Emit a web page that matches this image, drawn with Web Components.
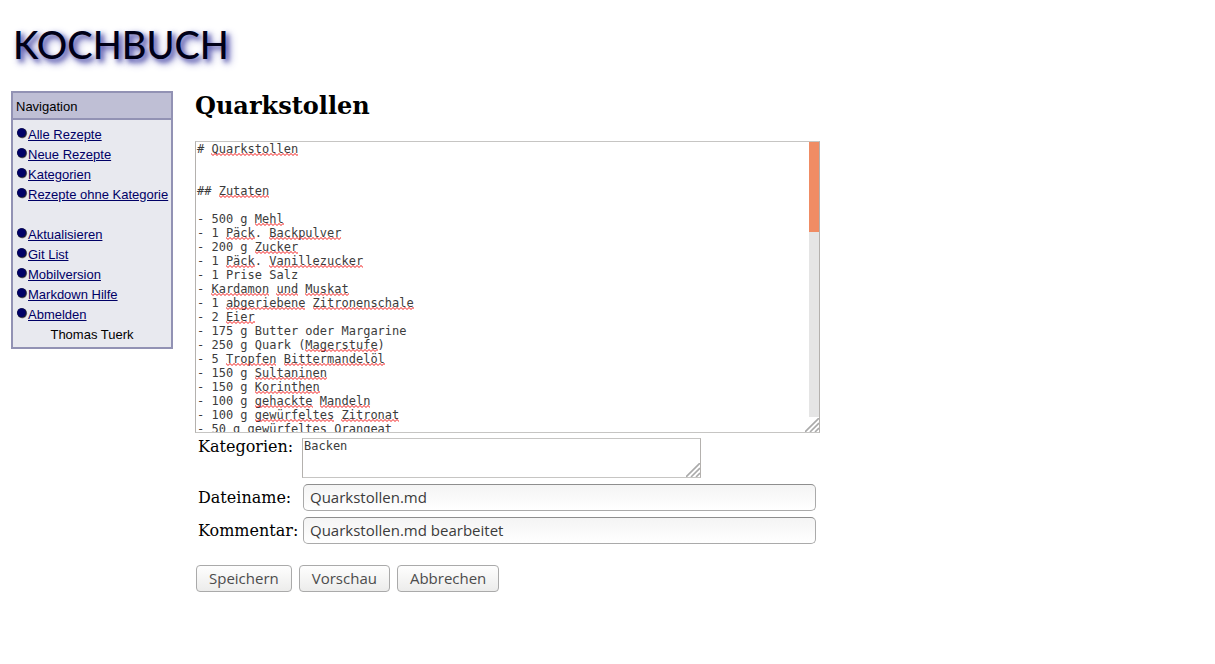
<!DOCTYPE html>
<html lang="de">
<head>
<meta charset="utf-8">
<title>Kochbuch – Quarkstollen</title>
<style>
  body { margin: 0; background: #fff; color: #000; font: 16px/20px "DejaVu Serif", serif; }
</style>
</head>
<body>
<kb-page>
  <kb-logo slot="logo">KOCHBUCH</kb-logo>
  <kb-nav slot="nav" heading="Navigation" user="Thomas Tuerk">
    <kb-link href="#alle">Alle Rezepte</kb-link>
    <kb-link href="#neue">Neue Rezepte</kb-link>
    <kb-link href="#kategorien">Kategorien</kb-link>
    <kb-link href="#ohne">Rezepte ohne Kategorie</kb-link>
    <kb-link class="group" href="#aktualisieren">Aktualisieren</kb-link>
    <kb-link href="#git">Git List</kb-link>
    <kb-link href="#mobil">Mobilversion</kb-link>
    <kb-link href="#markdown">Markdown Hilfe</kb-link>
    <kb-link href="#abmelden">Abmelden</kb-link>
  </kb-nav>
  <kb-editor></kb-editor>
</kb-page>

<script>
const define = (name, html, setup) => customElements.define(name, class extends HTMLElement {
  connectedCallback() {
    if (this.shadowRoot) return;
    const t = document.createElement('template');
    t.innerHTML = html;
    this.attachShadow({ mode: 'open' }).append(t.content.cloneNode(true));
    if (setup) setup(this, this.shadowRoot);
  }
});

define('kb-page', `
<style>
  :host { display: block; padding: 16px 11px; }
  header { height: 75px; }
  .columns { display: flex; align-items: flex-start; gap: 22px; }
  main { flex: 1; min-width: 0; }
</style>
<header><slot name="logo"></slot></header>
<div class="columns"><slot name="nav"></slot><main><slot></slot></main></div>`);

define('kb-logo', `
<style>
  :host { display: block; padding-left: 2px; color: #000018;
    font: 500 38px/56px Lato, sans-serif;
    text-shadow: 3px 3px 5px #5050a8, 4px 4px 8px #9090d0; }
</style><slot></slot>`);

define('kb-nav', `
<style>
  :host { display: block; flex: none; box-sizing: border-box; width: 162px;
    border: 2px solid #9292b4; background: #e8e9ef; font: 13px/20px "Liberation Sans", sans-serif; }
  h2 { margin: 0; padding: 4px 3px 1px; font: inherit; background: #bfbfd5; border-bottom: 2px solid #9292b4; }
  nav { padding: 5px 3px 2px; }
  ::slotted(.group) { margin-top: 20px; }
  .user { text-align: center; }
</style>
<h2></h2>
<nav><slot></slot><div class="user"></div></nav>`, (host, root) => {
  root.querySelector('h2').textContent = host.getAttribute('heading');
  root.querySelector('.user').textContent = host.getAttribute('user');
});

define('kb-link', `
<style>
  :host { display: flex; height: 20px; white-space: nowrap; }
  svg { flex: none; width: 12px; height: 12px; margin-top: 2px; }
  a { color: #000066; text-decoration: underline; text-underline-offset: 1px; }
</style>
<svg viewBox="0 0 12 12" aria-hidden="true">
  <circle cx="6.4" cy="6.6" r="4.8" fill="#999"/><circle cx="5.9" cy="6" r="4.8" fill="#1b1b30"/><circle cx="5.5" cy="5.6" r="4.3" fill="#000066"/>
</svg><a><slot></slot></a>`, (host, root) => {
  root.querySelector('a').href = host.getAttribute('href');
});

define('kb-grip', `
<style>
  :host { position: absolute; right: 0; bottom: 0; width: 14px; height: 14px; pointer-events: none; }
  :host([inset]) { right: 1px; bottom: 1px; }
  svg { display: block; }
</style>
<svg width="14" height="14" viewBox="0 0 14 14" aria-hidden="true">
  <path d="M0 14 14 0M5 14 14 5M10 14l4-4" fill="none" stroke="#aaa" stroke-width="1.6"/>
</svg>`);

define('kb-recipe-text', `
<style>
  :host { display: block; position: relative; box-sizing: border-box; height: 292px; background: #fff;
    border: 1px solid; border-color: #c6c5c3 #b4b1ae #c6c5c3 #b4b1ae;
    font: 12px/14px "DejaVu Sans Mono", monospace; }
  textarea { display: block; box-sizing: border-box; width: 100%; height: 290px; margin: 0; padding: 0 11px 0 1px;
    border: 0; outline: 0; background: none; color: #3c3c3c; font: inherit; resize: none; overflow: hidden; white-space: pre; }
  .marks { position: absolute; inset: 0; padding-left: 1px; overflow: hidden; pointer-events: none; }
  .line { display: flex; height: 14px; align-items: flex-end; }
  .mark { height: 3px; background: url("data:image/svg+xml,%3Csvg xmlns='http://www.w3.org/2000/svg' width='4' height='3'%3E%3Cpath d='M-1 -.5 2 2.5 5 -.5' fill='none' stroke='%23f00000' stroke-width='.9'/%3E%3C/svg%3E") repeat-x; }
  .track { position: absolute; top: 0; right: 0; width: 10px; height: 275px; background: #e5e5e5; }
  .thumb { height: 90px; background: #f08c64; }
</style>
<textarea aria-label="Rezept" spellcheck="false"></textarea>
<div class="marks" aria-hidden="true"></div>
<div class="track" aria-hidden="true"><div class="thumb"></div></div>
<kb-grip></kb-grip>`, (host, root) => {
  // Words between underscores get the wavy spelling mark.
  const source = `# _Quarkstollen_


## _Zutaten_

- 500 g _Mehl_
- 1 _Päck_. _Backpulver_
- 200 g _Zucker_
- 1 _Päck_. _Vanillezucker_
- 1 Prise Salz
- _Kardamon_ _und_ _Muskat_
- 1 _abgeriebene_ _Zitronenschale_
- 2 _Eier_
- 175 g Butter oder Margarine
- 250 g Quark (_Magerstufe_)
- 5 _Tropfen_ _Bittermandelöl_
- 150 g _Sultaninen_
- 150 g _Korinthen_
- 100 g _gehackte_ _Mandeln_
- 100 g _gewürfeltes_ _Zitronat_
- 50 g gewürfeltes Orangeat`;
  root.querySelector('textarea').value = source.replaceAll('_', '');
  const marks = root.querySelector('.marks');
  for (const text of source.split('\n')) {
    const line = document.createElement('div');
    line.className = 'line';
    text.split('_').forEach((part, i) => {
      const box = document.createElement('span');
      if (i % 2) box.className = 'mark';
      box.style.width = part.length + 'ch';
      line.append(box);
    });
    marks.append(line);
  }
});

define('kb-button', `
<style>
  :host { display: block; }
  button { display: block; box-sizing: border-box; height: 27px; margin: 0; padding: 0 12px 1px; border: 1px solid #aaa;
    border-radius: 4px; background: linear-gradient(#fefefe, #ececeb); color: #4c4c4c;
    font: 15px/20px "Open Sans", sans-serif; }
</style>
<button type="button"><slot></slot></button>`);

define('kb-editor', `
<style>
  :host { display: block; max-width: 625px; }
  h1 { margin: 0; padding: 1px 0 21px; font: bold 24px/28px "DejaVu Serif", serif; }
  .fields { display: grid; grid-template-columns: 104px 1fr; row-gap: 6px; padding: 5px 4px 0 3px; align-items: center; }
  .fields label:first-child { align-self: start; line-height: 18px; }
  .tags { position: relative; width: 399px; max-width: 100%; }
  .tags textarea { display: block; box-sizing: border-box; width: 100%; height: 40px; margin: 0; padding: 0 1px;
    border: 1px solid; border-color: #c6c5c3 #b4b1ae #c6c5c3 #b4b1ae; color: #3c3c3c; background: #fff;
    font: 12px/14px "DejaVu Sans Mono", monospace; resize: none; overflow: hidden; }
  input { box-sizing: border-box; height: 27px; margin: 0 0 0 1px; padding: 0 6px 1px; border: 1px solid #aaa;
    border-top-color: #8e8e8e; border-radius: 5px; background: linear-gradient(#f4f4f4, #fff); color: #3c3c3c;
    font: 15px/20px "Open Sans", sans-serif; }
  .actions { display: flex; gap: 7px; padding: 21px 0 0 1px; }
</style>
<h1>Quarkstollen</h1>
<kb-recipe-text></kb-recipe-text>
<div class="fields">
  <label for="tags">Kategorien:</label>
  <div class="tags"><textarea id="tags" spellcheck="false">Backen</textarea><kb-grip inset></kb-grip></div>
  <label for="file">Dateiname:</label>
  <input id="file" value="Quarkstollen.md">
  <label for="comment">Kommentar:</label>
  <input id="comment" value="Quarkstollen.md bearbeitet">
</div>
<div class="actions">
  <kb-button>Speichern</kb-button><kb-button>Vorschau</kb-button><kb-button>Abbrechen</kb-button>
</div>`);
</script>
</body>
</html>
